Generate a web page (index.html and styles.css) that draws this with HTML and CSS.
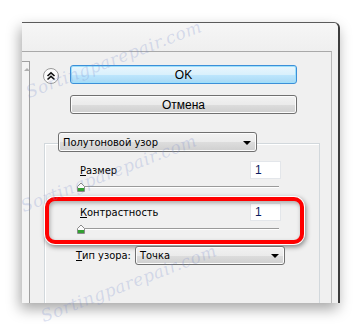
FILE: index.html
```html
<!DOCTYPE html>
<html>
<head>
<meta charset="utf-8">
<link rel="stylesheet" href="styles.css">
</head>
<body>
<div class="window">
  <div class="titlestrip"></div>
  <div class="frame">
    <div class="panel">
      <div class="preview"><span class="scroll-arrow"></span></div>
      <div class="controls">
        <div class="btn-row">
          <div class="collapse">
            <svg width="16" height="16" viewBox="0 0 16 16">
              <circle cx="8" cy="8" r="7.5" fill="#fbfbfb" stroke="#9a9a9a"/>
              <path d="M4.5 8 L8 4.8 L11.5 8 M4.5 11.5 L8 8.3 L11.5 11.5" fill="none" stroke="#111" stroke-width="1.6"/>
            </svg>
          </div>
          <div class="btn btn-ok">OK</div>
        </div>
        <div class="btn btn-cancel">Отмена</div>
        <div class="group">
          <div class="combo combo-filter">Полутоновой узор<span class="arrow"></span></div>
          <div class="field-row"><span class="lbl"><u>Р</u>азмер</span><span class="num">1</span></div>
          <div class="slider">
            <svg class="thumb" width="8" height="10" viewBox="0 0 8 10"><path d="M0.5 9.5 V4.5 L4 1 L7.5 4.5 V9.5 Z" fill="#fafafa" stroke="#8a8a8a"/><rect x="1" y="6" width="6" height="3" fill="#32a032"/></svg>
            <span class="track"></span>
          </div>
          <div class="highlighted">
            <div class="field-row"><span class="lbl"><u>К</u>онтрастность</span><span class="num">1</span></div>
            <div class="slider">
              <svg class="thumb" width="8" height="10" viewBox="0 0 8 10"><path d="M0.5 9.5 V4.5 L4 1 L7.5 4.5 V9.5 Z" fill="#fafafa" stroke="#8a8a8a"/><rect x="1" y="6" width="6" height="3" fill="#32a032"/></svg>
              <span class="track"></span>
            </div>
            <div class="red-mark"></div>
          </div>
          <div class="type-row"><span class="lbl"><u>Т</u>ип узора:</span><div class="combo combo-type">Точка<span class="arrow"></span></div></div>
        </div>
      </div>
    </div>
    <div class="rstrip"></div>
  </div>
</div>
<div class="wm wm1">Sortingparepair.com</div>
<div class="wm wm2">Sortingparepair.com</div>
<div class="wm wm3">Sortingparepair.com</div>
</body>
</html>
```
FILE: styles.css
```css
* { box-sizing: border-box; }
html, body { margin: 0; padding: 0; background: #fff; }
body {
  width: 364px; height: 326px; overflow: hidden; position: relative;
  font-family: "DejaVu Sans Condensed", "DejaVu Sans", sans-serif;
  font-stretch: condensed;
  font-size: 11px; color: #000;
}
.window {
  margin: 22px 0 0 22px;
  width: 318px; height: 281px;
  background: #f0f0f0;
  border-top: 1px solid #5a5a5a;
  border-right: 2px solid #3c3c3c;
  border-top-right-radius: 6px;
  box-shadow: -2px 6px 14px rgba(0,0,0,0.35);
  display: flex; flex-direction: column;
}
.titlestrip { height: 28px; background: linear-gradient(#f6f6f6, #efefef); border-top-right-radius: 5px; }
.frame { flex: 1; display: flex; }
.panel {
  width: 310px; border-top: 1px solid #a9a9a9; border-right: 1px solid #b9b9b9;
  display: flex;
}
.rstrip { flex: 1; background: #f0f0f0; }
.preview {
  width: 8px; margin-top: 9px;
  border-top: 1px solid #a0a0a0; border-right: 1px solid #a0a0a0;
  background: #f4f4f4; position: relative;
}
.scroll-arrow {
  position: absolute; left: 2px; top: 6px; width: 0; height: 0;
  border-left: 3px solid transparent; border-right: 3px solid transparent; border-bottom: 3px solid #b0b0b0;
}
.controls { flex: 1; padding: 13px 0 0 13px; display: flex; flex-direction: column; }
.btn-row { display: flex; align-items: center; height: 19px; }
.collapse { width: 16px; height: 16px; display: flex; margin-top: 2px; }
.btn {
  height: 19px; width: 227px; border-radius: 3px; flex: none;
  display: flex; align-items: center; justify-content: center;
  font-family: "Liberation Sans", sans-serif; font-size: 12px; font-stretch: normal;
}
.btn-ok {
  margin-left: 11px;
  border: 1px solid #3c8fd8;
  background: linear-gradient(#e9f6fd 0%, #d9f0fc 50%, #bee6fd 51%, #a7d9f5 100%);
  box-shadow: inset 0 0 0 1px #9ee0fb;
}
.btn-cancel {
  margin: 11px 0 0 27px;
  border: 1px solid #707070;
  background: linear-gradient(#f2f2f2 0%, #ebebeb 50%, #dddddd 51%, #cfcfcf 100%);
  box-shadow: inset 0 0 0 1px #fcfcfc;
}
.group {
  margin: 29px 0 0 1px; width: 276px; flex: 1;
  border: 1px solid #d2d8dc; border-bottom: none;
  box-shadow: inset 1px 1px 0 #fff;
  padding: 0 0 0 35px;
  position: relative;
}
.combo {
  height: 20px; border: 1px solid #707070; border-radius: 3px;
  background: linear-gradient(#f2f2f2 0%, #ebebeb 50%, #dddddd 51%, #cfcfcf 100%);
  box-shadow: inset 0 0 0 1px #fcfcfc;
  display: flex; align-items: center; padding-left: 4px; position: relative;
}
.arrow {
  position: absolute; right: 5px; top: 8px; width: 0; height: 0;
  border-left: 4px solid transparent; border-right: 4px solid transparent; border-top: 4px solid #000;
}
.combo-filter { width: 199px; margin: -12px 0 0 -22px; }
.field-row { display: flex; align-items: center; justify-content: space-between; width: 201px; height: 18px; margin-top: 9px; }
.lbl { line-height: 13px; }
.num {
  width: 31px; height: 18px; background: #fff; border: 1px solid #e3e6ea;
  color: #0a1c60; padding: 2px 0 0 4px; line-height: 13px;
  font-family: "Liberation Sans", sans-serif; font-size: 12px; font-stretch: normal;
}
.slider { position: relative; width: 204px; height: 10px; margin: 3px 0 0 -3px; }
.track {
  position: absolute; left: 6px; right: 2px; top: 4px; height: 1px;
  background: #9a9a9a; box-shadow: 0 1px 0 #ffffff;
}
.thumb { position: absolute; left: 0; top: 0; z-index: 1; }
.highlighted { position: relative; margin-top: 5px; padding-top: 1px; height: 45px; }
.highlighted .field-row { margin-top: 5px; }
.red-mark {
  position: absolute; left: -35px; top: 0; width: 259px; height: 47px;
  border: 4px solid #f00; border-radius: 10px;
  box-shadow: 0 0 0 1px #fff, 1px 2px 5px 1px rgba(0,0,0,0.45), inset 1px 2px 4px rgba(0,0,0,0.3);
}
.type-row { display: flex; align-items: center; margin: 4px 0 0 -4px; }
.type-row .lbl { margin-right: 4px; }
.combo-type { width: 150px; height: 19px; }
.combo-type .arrow { top: 7px; }
.wm {
  position: absolute; font-family: "DejaVu Serif", serif; font-style: italic; font-size: 17px;
  color: rgba(120,140,205,0.26); transform: rotate(-21deg); transform-origin: 0 100%;
  white-space: nowrap; letter-spacing: 0.5px; font-stretch: normal; pointer-events: none;
}
.wm1 { left: 30px; top: 82px; }
.wm2 { left: 25px; top: 196px; }
.wm3 { left: 45px; top: 306px; }
```
